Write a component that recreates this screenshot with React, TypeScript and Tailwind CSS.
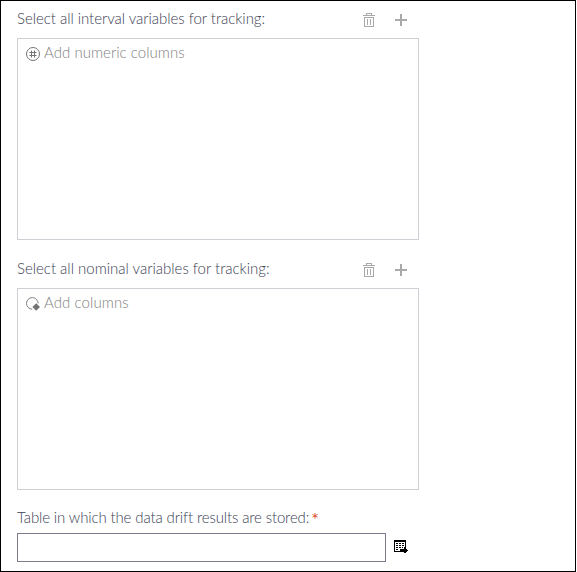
import React from "react";

function TrashIcon() {
  return (
    <svg width="12" height="14" viewBox="0 0 12 14" fill="none" stroke="#a9a9a9" shapeRendering="crispEdges">
      <path d="M0 2.5H12M3.5 2.5V0.5H8.5V2.5M1.5 4.5H10.5V13.5H1.5ZM4.5 6V12M7.5 6V12" />
    </svg>
  );
}

function PlusIcon() {
  return (
    <svg width="12" height="12" viewBox="0 0 12 12" fill="#a9a9a9" shapeRendering="crispEdges">
      <path d="M5 0H7V5H12V7H7V12H5V7H0V5H5Z" />
    </svg>
  );
}

function NumericIcon() {
  return (
    <svg width="14" height="14" viewBox="0 0 14 14" fill="none" stroke="#747474">
      <circle cx="7" cy="7" r="6.5" />
      <path d="M5.5 3.5V10.5M8.5 3.5V10.5M3.5 5.5H10.5M3.5 8.5H10.5" />
    </svg>
  );
}

function ColumnIcon() {
  return (
    <svg width="14" height="14" viewBox="0 0 14 14">
      <path d="M6.2 12.2A5.8 5.8 0 1 1 12.1 6.4" fill="none" stroke="#808080" />
      <path d="M10.2 6.2L14 10L10.2 13.8L6.4 10Z" fill="#747474" />
    </svg>
  );
}

function TableIcon() {
  return (
    <svg width="14" height="14" viewBox="0 0 14 14" fill="#000" shapeRendering="crispEdges">
      <path d="M0 0H12V8H11V2H1V11H6V12H0Z" />
      <path d="M2 3h2v1h-2zM5 3h2v1h-2zM8 3h2v1h-2zM2 5h2v1h-2zM5 5h2v1h-2zM8 5h2v1h-2zM2 7h2v1h-2zM5 7h2v1h-2zM8 7h1v1h-1zM2 9h2v1h-2z" />
      <path d="M6 9H10V7H11V8H12V9H13V10H14V11H13V12H12V13H10V12H6Z" />
    </svg>
  );
}

interface VariableListProps {
  label: string;
  labelClass: string;
  placeholder: string;
  placeholderClass: string;
  icon: React.ReactNode;
}

function VariableList({ label, labelClass, placeholder, placeholderClass, icon }: VariableListProps) {
  return (
    <section className="flex h-[250px] w-[402px] flex-col">
      <div className="flex h-[37px] items-start justify-between">
        <span className={`mt-[7px] whitespace-nowrap leading-5 ${labelClass}`}>{label}</span>
        <div className="mr-3 mt-3 flex items-center gap-5">
          <button aria-label="Remove"><TrashIcon /></button>
          <button aria-label="Add"><PlusIcon /></button>
        </div>
      </div>
      <div className="flex h-[202px] items-start border border-[#cfcfd6] pl-2 text-[#808080]">
        <span className="mt-2">{icon}</span>
        <span className={`ml-1 mt-[3px] whitespace-nowrap leading-5 ${placeholderClass}`}>{placeholder}</span>
      </div>
    </section>
  );
}

export default function App() {
  return (
    <main className="flex h-[572px] w-[576px] flex-col border border-black bg-white pl-4 font-['Lato','Open_Sans',sans-serif] text-[15px] font-light text-[#3b4254]">
      <VariableList
        label="Select all interval variables for tracking:"
        labelClass="tracking-[-0.04px]"
        placeholder="Add numeric columns"
        placeholderClass="tracking-[0.03px]"
        icon={<NumericIcon />}
      />
      <VariableList
        label="Select all nominal variables for tracking:"
        labelClass="tracking-[-0.01px]"
        placeholder="Add columns"
        placeholderClass="tracking-[0.08px]"
        icon={<ColumnIcon />}
      />
      <label className="mt-[6px] flex h-5 items-center whitespace-nowrap leading-5">
        <span className="tracking-[-0.13px]">Table in which the data drift results are stored:</span>
        <span className="ml-0.5 mt-1 text-[18px] font-normal text-[#d9502e]">*</span>
      </label>
      <div className="mt-[6px] flex items-start">
        <input className="h-[29px] w-[369px] border border-[#7b7d8f] px-2 outline-none" />
        <button aria-label="Choose table" className="ml-2 mt-[7px]"><TableIcon /></button>
      </div>
    </main>
  );
}
